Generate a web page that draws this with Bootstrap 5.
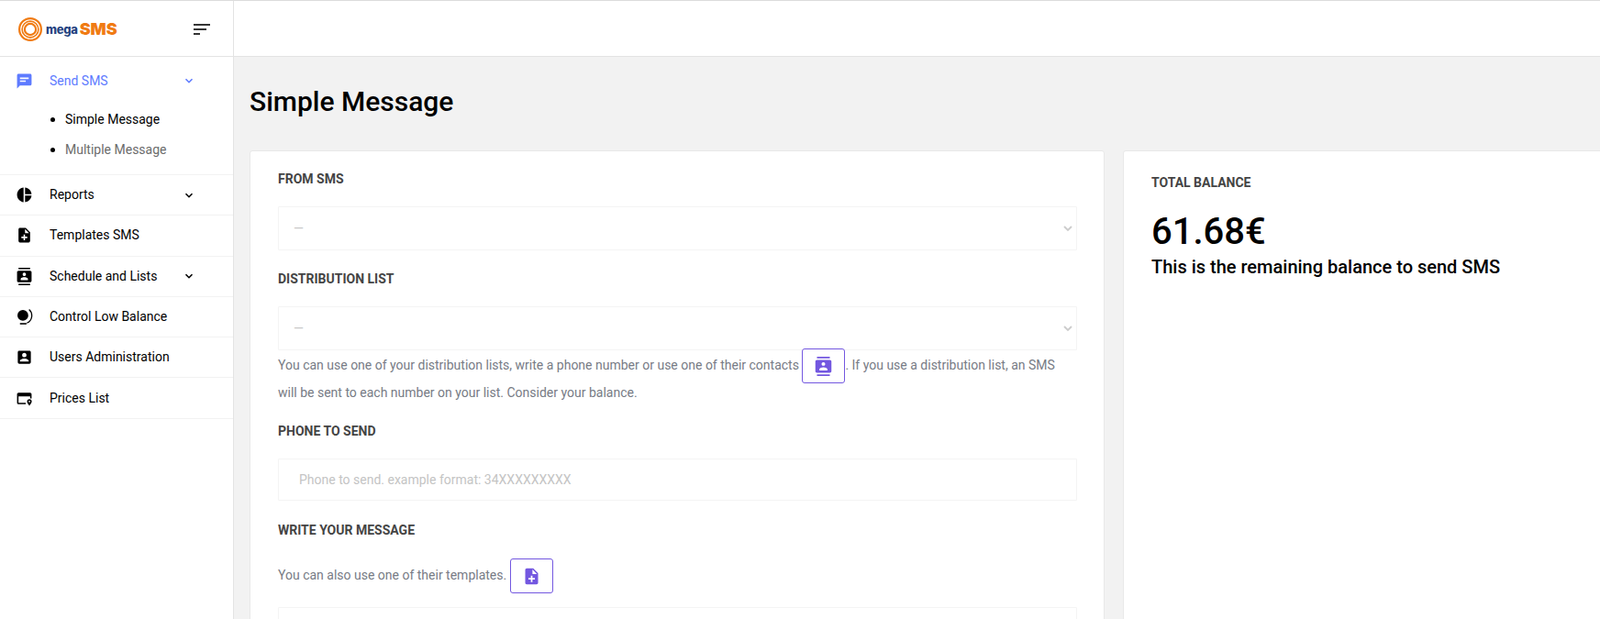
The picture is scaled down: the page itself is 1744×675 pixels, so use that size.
<!DOCTYPE html>
<html lang="en">
<head>
    <meta charset="UTF-8">
    <title>megaSMS - Simple Message</title>
    <link rel="stylesheet" href="https://cdn.jsdelivr.net/npm/bootstrap@5.3.3/dist/css/bootstrap.min.css">
    <script src="https://cdn.jsdelivr.net/npm/bootstrap@5.3.3/dist/js/bootstrap.bundle.min.js"></script>
    <style>
    html, body { height: 100%; overflow: hidden; }
    body { font-family: Roboto, "Liberation Sans", sans-serif; font-size: 14px; color: #000; background: #f2f2f2; border-top: 1px solid #dcdcdc; }
    .app-shell { height: 674px; }
    .side-panel { width: 255px; flex: none; background: #fff; border-right: 1px solid #e3e3e3; }
    .brand-bar { height: 61px; border-bottom: 1px solid #e3e3e3; padding: 2px 25px 0 20px; }
    .brand-word { font-family: Inter, "Liberation Sans", sans-serif; line-height: 1; }
    .brand-mega { font-size: 13px; font-weight: 800; color: #24427f; margin-left: 4px; letter-spacing: -.3px; }
    .brand-sms { font-size: 18px; font-weight: 900; color: #f07b12; margin-left: 2px; letter-spacing: 0; }
    .toggle-bars { width: 18px; display: flex; flex-direction: column; gap: 3px; }
    .toggle-bars i { display: block; height: 2px; background: #333; }
    .toggle-bars i:nth-child(2) { width: 14px; }
    .toggle-bars i:nth-child(3) { width: 7px; }
    .menu-row { height: 44.3px; padding: 0 0 0 17px; border-bottom: 1px solid #f2f2f2; color: #000; text-decoration: none; }
    .menu-row svg.glyph { width: 19px; height: 19px; fill: #000; flex: none; margin-right: 18px; }
    .menu-row .caret-mark { margin-left: auto; margin-right: 43px; width: 10px; height: 10px; fill: none; stroke: currentColor; stroke-width: 1.6; }
    .menu-open { height: 52px; border-bottom: 0; color: #5e7bff; }
    .menu-open svg.glyph { fill: #5e7bff; }
    .submenu { height: 77px; border-bottom: 1px solid #f2f2f2; padding: 0 0 0 55px; }
    .submenu a { display: flex; align-items: center; height: 33px; text-decoration: none; color: #000; }
    .submenu a + a { color: #6c6c6c; }
    .submenu a::before { content: ""; width: 5px; height: 5px; border-radius: 50%; background: #000; margin-right: 11px; }
    .top-strip { height: 61px; background: #fff; border-bottom: 1px solid #e3e3e3; }
    .work-area { min-width: 0; overflow: hidden; }
    .page-title { font-size: 30px; font-weight: 500; color: #000; padding: 31px 0 0 17px; height: 102px; margin: 0; line-height: 36px; }
    .card-row { padding-left: 17px; gap: 20px; width: 1900px; }
    .panel-form { width: 932px; flex: none; height: 600px; padding: 0 30px; border-color: #e8e8e8; border-radius: 3px; }
    .panel-total { width: 930px; flex: none; height: 600px; padding: 0 30px; border-color: #e8e8e8; border-radius: 3px; }
    .field-title { font-size: 14px; font-weight: 700; color: #444; margin: 0; text-transform: uppercase; line-height: 16px; }
    .title-from { margin-top: 22px; }
    .title-next { margin-top: 23px; }
    .title-phone { margin-top: 19px; }
    .title-write { margin-top: 24px; }
    .title-total { margin-top: 26px; }
    .field-box { height: 48px; margin-top: 22px; border: 1px solid #f4f4f4; border-radius: 1px; width: 871px; padding: 0 16px; color: #c8c8c8; font-size: 14px; background-color: #fff; }
    .field-box:disabled { background-color: #fff; }
    .fake-select { --bs-form-select-bg-img: url("data:image/svg+xml,%3csvg xmlns='http://www.w3.org/2000/svg' viewBox='0 0 10 10'%3e%3cpath fill='none' stroke='%23ccc' stroke-width='1.8' d='M1 3l4 4 4-4'/%3e%3c/svg%3e"); background-position: right 4px center; background-size: 10px 10px; }
    .field-input { height: 46px; margin-top: 22px; padding: 0 22px; border-color: #f4f4f4; }
    .field-input::placeholder { color: #c4c4c4; opacity: 1; }
    .message-box { height: 60px; margin-top: 20px; }
    .hint-line { color: #777b85; line-height: 30px; margin: 1px 0 0; }
    .hint-templates { margin-top: 26px; }
    .pick-btn { width: 47px; height: 38px; padding: 0; margin: -6px 0; border: 1px solid #7357e0; border-radius: 3px; background: #fff; display: inline-flex; align-items: center; justify-content: center; vertical-align: middle; }
    .pick-btn svg { width: 21px; height: 21px; fill: #7357e0; }
    .balance-value { font-size: 40px; font-weight: 500; line-height: 48px; margin: 22px 0 2px; color: #000; }
    .balance-note { font-size: 20px; font-weight: 500; line-height: 24px; margin: 0; color: #000; }
    </style>
</head>
<body>
    <div class="app-shell d-flex">
        <aside class="side-panel">
            <div class="brand-bar d-flex align-items-center justify-content-between">
                <div class="d-flex align-items-center">
                    <svg width="26" height="26" viewBox="0 0 26 26" fill="none" stroke="#f07b12">
                        <circle cx="13" cy="13" r="11.9" stroke-width="2.2"/>
                        <circle cx="13" cy="13" r="8.9" stroke-width="1.6"/>
                        <circle cx="13" cy="13" r="6.1" stroke-width="2.2"/>
                    </svg>
                    <span class="brand-word brand-mega">mega</span>
                    <span class="brand-word brand-sms">SMS</span>
                </div>
                <div class="toggle-bars"><i></i><i></i><i></i></div>
            </div>

            <a href="#" class="menu-row menu-open d-flex align-items-center">
                <svg class="glyph" viewBox="0 0 24 24"><path d="M20 2H4c-1.1 0-1.99.9-1.99 2L2 22l4-4h14c1.1 0 2-.9 2-2V4c0-1.1-.9-2-2-2zM6 7h12v2H6zm0 4h8v2H6z"/></svg>
                Send SMS
                <svg class="caret-mark" viewBox="0 0 10 10"><path d="M1.5 3.2 5 6.7l3.5-3.5"/></svg>
            </a>
            <div class="submenu">
                <a href="#">Simple Message</a>
                <a href="#">Multiple Message</a>
            </div>
            <a href="#" class="menu-row d-flex align-items-center">
                <svg class="glyph" viewBox="0 0 24 24"><path d="M11 2v20c-5.07-.5-9-4.79-9-10s3.93-9.5 9-10zm2.03 0v8.99H22c-.47-4.74-4.24-8.52-8.97-8.99zm0 11.01V22c4.74-.47 8.5-4.25 8.97-8.99h-8.97z"/></svg>
                Reports
                <svg class="caret-mark" viewBox="0 0 10 10"><path d="M1.5 3.2 5 6.7l3.5-3.5"/></svg>
            </a>
            <a href="#" class="menu-row d-flex align-items-center">
                <svg class="glyph" viewBox="0 0 24 24"><path d="M14 2H6c-1.1 0-1.99.9-1.99 2L4 20c0 1.1.89 2 1.99 2H18c1.1 0 2-.9 2-2V8l-6-6zm2 14h-3v3h-2v-3H8v-2h3v-3h2v3h3v2zm-3-7V3.5L18.5 9H13z"/></svg>
                Templates SMS
            </a>
            <a href="#" class="menu-row d-flex align-items-center">
                <svg class="glyph" viewBox="0 0 24 24"><path d="M20 0H4v2h16V0zM4 24h16v-2H4v2zM20 4H4c-1.1 0-2 .9-2 2v12c0 1.1.9 2 2 2h16c1.1 0 2-.9 2-2V6c0-1.1-.9-2-2-2zm-8 2.75c1.24 0 2.25 1.01 2.25 2.25s-1.01 2.25-2.25 2.25S9.75 10.24 9.75 9 10.76 6.75 12 6.75zM17 17H7v-1.5c0-1.67 3.33-2.5 5-2.5s5 .83 5 2.5V17z"/></svg>
                Schedule and Lists
                <svg class="caret-mark" viewBox="0 0 10 10"><path d="M1.5 3.2 5 6.7l3.5-3.5"/></svg>
            </a>
            <a href="#" class="menu-row d-flex align-items-center">
                <svg class="glyph" viewBox="0 0 24 24"><circle cx="10" cy="10" r="7.5"/><path fill="none" stroke="#000" stroke-width="1.6" d="M18.500 2a11 11 0 0 1-3 18.500"/><path d="M6 20.500h9v2H6z"/></svg>
                Control Low Balance
            </a>
            <a href="#" class="menu-row d-flex align-items-center">
                <svg class="glyph" viewBox="0 0 24 24"><path d="M3 5v14c0 1.1.89 2 2 2h14c1.1 0 2-.9 2-2V5c0-1.1-.9-2-2-2H5c-1.11 0-2 .9-2 2zm12 4c0 1.66-1.34 3-3 3s-3-1.34-3-3 1.34-3 3-3 3 1.34 3 3zm-9 8c0-2 4-3.100 6-3.100s6 1.100 6 3.100v1H6v-1z"/></svg>
                Users Administration
            </a>
            <a href="#" class="menu-row d-flex align-items-center">
                <svg class="glyph" viewBox="0 0 24 24"><path d="M4 4h16a2 2 0 0 1 2 2v6h-2V9H4v9h10v2H4a2 2 0 0 1-2-2V6a2 2 0 0 1 2-2z"/><path d="M19 13a3.200 3.200 0 0 0-3.200 3.200c0 2.300 3.200 5.800 3.200 5.800s3.200-3.500 3.200-5.800A3.200 3.200 0 0 0 19 13zm0 4.300a1.100 1.100 0 1 1 0-2.200 1.100 1.100 0 0 1 0 2.200z"/></svg>
                Prices List
            </a>
        </aside>

        <main class="work-area flex-grow-1">
            <div class="top-strip"></div>
            <h1 class="page-title">Simple Message</h1>
            <div class="card-row d-flex align-items-start">
                <section class="card panel-form">
                    <h6 class="field-title title-from">From SMS</h6>
                    <select class="form-select field-box fake-select shadow-none" disabled><option>—</option></select>
                    <h6 class="field-title title-next">Distribution list</h6>
                    <select class="form-select field-box fake-select shadow-none" disabled><option>—</option></select>
                    <p class="hint-line">You can use one of your distribution lists, write a phone number or use one of their contacts
                        <button class="pick-btn" type="button" aria-label="Contacts"><svg viewBox="0 0 24 24"><path d="M20 0H4v2h16V0zM4 24h16v-2H4v2zM20 4H4c-1.1 0-2 .9-2 2v12c0 1.1.9 2 2 2h16c1.1 0 2-.9 2-2V6c0-1.1-.9-2-2-2zm-8 2.75c1.24 0 2.25 1.01 2.25 2.25s-1.01 2.25-2.25 2.25S9.75 10.24 9.75 9 10.76 6.75 12 6.75zM17 17H7v-1.5c0-1.67 3.33-2.5 5-2.5s5 .83 5 2.5V17z"/></svg></button>. If you use a distribution list, an SMS will be sent to each number on your list. Consider your balance.</p>
                    <h6 class="field-title title-phone">Phone to send</h6>
                    <input class="form-control field-box field-input shadow-none" placeholder="Phone to send. example format: 34XXXXXXXXX">
                    <h6 class="field-title title-write">Write your message</h6>
                    <p class="hint-line hint-templates">You can also use one of their templates.
                        <button class="pick-btn" type="button" aria-label="Templates"><svg viewBox="0 0 24 24"><path d="M14 2H6c-1.1 0-1.99.9-1.99 2L4 20c0 1.1.89 2 1.99 2H18c1.1 0 2-.9 2-2V8l-6-6zm2 14h-3v3h-2v-3H8v-2h3v-3h2v3h3v2zm-3-7V3.500L18.500 9H13z"/></svg></button></p>
                    <div class="field-box message-box"></div>
                </section>
                <section class="card panel-total">
                    <h6 class="field-title title-total">Total balance</h6>
                    <p class="balance-value">61.68€</p>
                    <p class="balance-note">This is the remaining balance to send SMS</p>
                </section>
            </div>
        </main>
    </div>
</body>
</html>
